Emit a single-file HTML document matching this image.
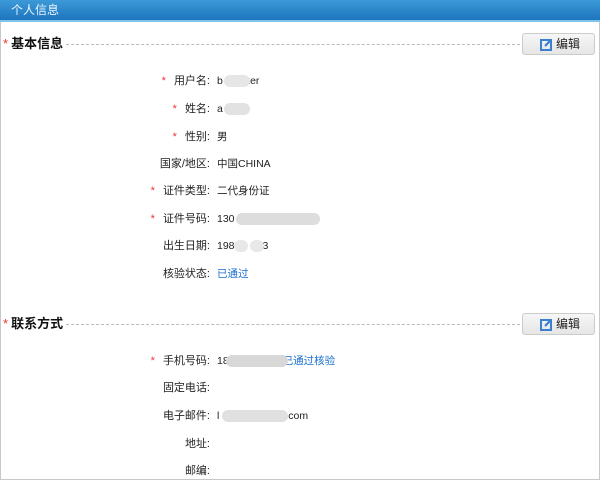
<!DOCTYPE html>
<html><head><meta charset="utf-8"><style>
*{margin:0;padding:0;box-sizing:border-box}
body{width:600px;height:483px;background:#fff;font-family:"Liberation Sans","Noto Sans CJK SC",sans-serif;font-size:11px;color:#222;position:relative;overflow:hidden}
.frame{position:absolute;left:0;top:0;width:600px;height:480px;border:1px solid #c8c8c8}
.hdr{position:absolute;left:0;top:0;width:600px;height:22px;background:linear-gradient(#3d9ad8,#1d75bd);border-bottom:2px solid #7fc2ea;color:#e8f4ff;font-size:12px;line-height:20px;padding-left:11px}
.sec{position:absolute;left:0;width:600px;height:20px}
.sec .st{position:absolute;left:3px;top:0;font-size:13px;font-weight:bold;color:#111;line-height:20px}
.sec .st b{color:#e33;font-weight:normal;margin-right:3px}
.sec .dash{position:absolute;left:66px;right:80px;top:10px;border-top:1px dashed #bbb}
.btn{position:absolute;right:5px;top:-1px;width:73px;height:22px;border:1px solid #ccc;border-radius:3px;background:linear-gradient(#f6f6f6,#e6e6e6);font-size:12px;line-height:20px;padding-left:33px;color:#222}
.btn svg{position:absolute;left:17px;top:4px}
.row{position:absolute;left:0;width:600px;height:16px;line-height:16px}
.lab{position:absolute;right:390px;text-align:right;white-space:nowrap}
.lab b{color:#e33;font-weight:normal;margin-right:8px}
.val{position:absolute;left:217px;white-space:nowrap;font-size:10.5px}
.blue{color:#1a6fd0}
.blur{position:absolute;height:12px;top:2px;background:#ddd;border-radius:6px}
</style></head><body>
<div class="frame"></div>
<div class="hdr">个人信息</div>
<div class="sec" style="top:34px"><div class="st"><b>*</b>基本信息</div><div class="dash"></div><div class="btn"><svg width="13" height="13" viewBox="0 0 13 13"><rect x="1" y="2" width="10" height="10" fill="none" stroke="#3b7fd0" stroke-width="2"/><path d="M5 8 L11 2" stroke="#3b7fd0" stroke-width="2.2"/></svg>编辑</div></div>
<div class="row" style="top:73px"><span class="lab"><b>*</b>用户名:</span><span class="val">b<span style="display:inline-block;width:22px"></span>ker</span><div class="blur" style="left:224px;width:26px;background:#e6e6e6"></div></div>
<div class="row" style="top:101px"><span class="lab"><b>*</b>姓名:</span><span class="val">a</span><div class="blur" style="left:224px;width:26px;background:#e2e2e2"></div></div>
<div class="row" style="top:129px"><span class="lab"><b>*</b>性别:</span><span class="val">男</span></div>
<div class="row" style="top:156px"><span class="lab">国家/地区:</span><span class="val">中国CHINA</span></div>
<div class="row" style="top:183px"><span class="lab"><b>*</b>证件类型:</span><span class="val">二代身份证</span></div>
<div class="row" style="top:211px"><span class="lab"><b>*</b>证件号码:</span><span class="val">130</span><div class="blur" style="left:236px;width:84px"></div></div>
<div class="row" style="top:238px"><span class="lab">出生日期:</span><span class="val">198<span style="display:inline-block;width:28px"></span>3</span><div class="blur" style="left:234px;width:14px;background:#e8e8e8"></div><div class="blur" style="left:250px;width:14px;background:#e8e8e8"></div></div>
<div class="row" style="top:266px"><span class="lab">核验状态:</span><span class="val blue">已通过</span></div>
<div class="sec" style="top:314px"><div class="st"><b>*</b>联系方式</div><div class="dash"></div><div class="btn"><svg width="13" height="13" viewBox="0 0 13 13"><rect x="1" y="2" width="10" height="10" fill="none" stroke="#3b7fd0" stroke-width="2"/><path d="M5 8 L11 2" stroke="#3b7fd0" stroke-width="2.2"/></svg>编辑</div></div>
<div class="row" style="top:353px"><span class="lab"><b>*</b>手机号码:</span><span class="val">18<span style="display:inline-block;width:54px"></span><span class="blue">已通过核验</span></span><div class="blur" style="left:226px;width:62px;background:#d8d8d8"></div></div>
<div class="row" style="top:380px"><span class="lab">固定电话:</span></div>
<div class="row" style="top:408px"><span class="lab">电子邮件:</span><span class="val">l<span style="display:inline-block;width:66px"></span>.com</span><div class="blur" style="left:222px;width:66px;background:#e0e0e0"></div></div>
<div class="row" style="top:436px"><span class="lab">地址:</span></div>
<div class="row" style="top:463px"><span class="lab">邮编:</span></div>
</body></html>
